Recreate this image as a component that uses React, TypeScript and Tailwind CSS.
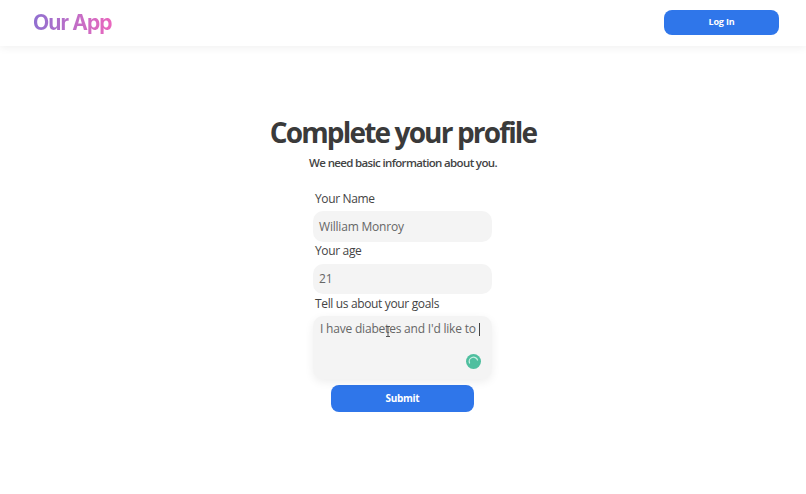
export default function App() {
  return (
    <div className="w-[806px] h-[494px] overflow-hidden bg-white font-['Open_Sans',sans-serif]">
      <header className="h-[46px] flex items-center justify-between pl-[33px] pr-[27px] shadow-[0_2px_8px_rgba(0,0,0,0.06)]">
        <span className="font-['Inter',sans-serif] text-[21px] leading-[26px] font-bold tracking-[-0.9px] bg-gradient-to-r from-[#8f6fd0] to-[#ea66bd] bg-clip-text text-transparent">
          Our App
        </span>
        <button className="w-[115px] h-[25px] mb-[2px] rounded-[8px] bg-[#2f76ea] text-white text-[9px] font-bold tracking-[-0.2px]">
          Log In
        </button>
      </header>

      <main className="flex flex-col items-center pt-[67px]">
        <h1 className="text-[28px] leading-[38px] font-bold tracking-[-1.85px] text-[#3a3a3a]">Complete your profile</h1>
        <p className="mt-[3px] text-[11.5px] leading-[18px] font-semibold tracking-[-0.65px] text-[#444]">We need basic information about you.</p>

        <form className="w-[179px] mr-[1px] mt-[18px] flex flex-col">
          <label className="pl-[2px] text-[12px] leading-[18px] tracking-[-0.35px] text-[#444]">Your Name</label>
          <div className="mt-[3px] h-[31px] rounded-[10px] bg-[#f4f4f4] flex items-center pl-[6px] text-[12px] tracking-[-0.2px] text-[#666]">William Monroy</div>
          <label className="pl-[2px] text-[12px] leading-[18px] tracking-[-0.35px] text-[#444]">Your age</label>
          <div className="mt-[4px] h-[30px] rounded-[10px] bg-[#f4f4f4] flex items-center pl-[6px] text-[12px] tracking-[-0.2px] text-[#666]">21</div>
          <label className="mt-[1px] pl-[2px] text-[12px] leading-[18px] tracking-[-0.35px] text-[#444]">Tell us about your goals</label>
          <div className="relative mt-[3px] h-[63px] rounded-[10px] bg-[#f4f4f4] shadow-[0_3px_10px_rgba(0,0,0,0.07)] pl-[7px] pt-[4px] text-[12px] leading-[18px] tracking-[-0.2px] text-[#666]">
            <span>I have diabetes and I'd like to</span>
            <span className="inline-block align-middle ml-[3px] w-px h-[13px] bg-[#444]" />
            <svg className="absolute left-[72px] top-[10px]" width="6" height="11" viewBox="0 0 6 11" fill="none" stroke="#555" strokeWidth="1">
              <path d="M1 .5h4M3 .5v10M1 10.5h4" />
            </svg>
            <span className="absolute left-[153px] top-[38px] w-[15px] h-[15px] rounded-full bg-[#4fbf9f] flex items-center justify-center">
              <svg width="11" height="11" viewBox="0 0 11 11" fill="none" stroke="#c9eee2" strokeWidth="1.3" strokeLinecap="round">
                <path d="M1.5 7A4.2 4.2 0 0 1 9.5 4" />
              </svg>
            </span>
          </div>
          <button type="button" className="self-center mt-[6px] w-[143px] h-[27px] rounded-[8px] bg-[#2f76ea] text-white text-[10px] font-bold tracking-[-0.3px]">
            Submit
          </button>
        </form>
      </main>
    </div>
  )
}
